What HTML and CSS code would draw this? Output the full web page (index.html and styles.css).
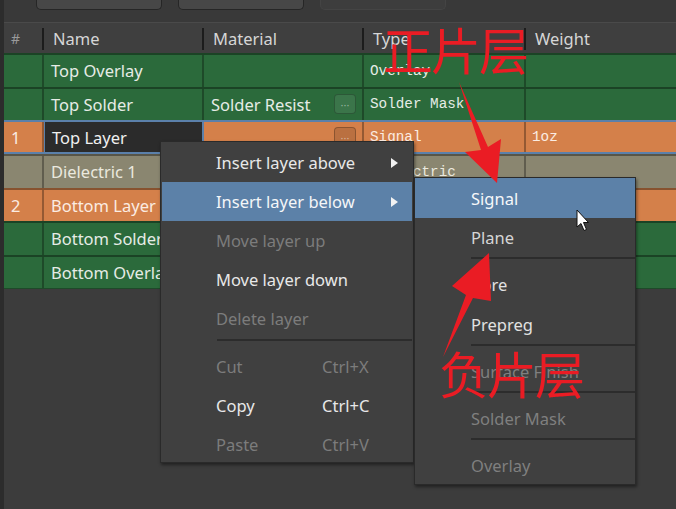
FILE: index.html
```html
<!DOCTYPE html>
<html>
<head>
<meta charset="utf-8">
<link rel="stylesheet" href="styles.css">
</head>
<body>
<div class="app">
  <div class="toolbar">
    <div class="tbtn"></div>
    <div class="tbtn"></div>
    <div class="tbtn flat"></div>
  </div>
  <div class="table">
    <div class="hdr">
      <div class="hc">#</div>
      <div class="hc">Name</div>
      <div class="hc">Material</div>
      <div class="hc">Type</div>
      <div class="hc last">Weight</div>
    </div>
    <div class="row green">
      <div class="c num"></div>
      <div class="c">Top Overlay</div>
      <div class="c"></div>
      <div class="c mono">Overlay</div>
      <div class="c mono"></div>
    </div>
    <div class="row green">
      <div class="c num"></div>
      <div class="c">Top Solder</div>
      <div class="c mat">Solder Resist<span class="dots">···</span></div>
      <div class="c mono">Solder Mask</div>
      <div class="c mono"></div>
    </div>
    <div class="row orange sel">
      <div class="c num">1</div>
      <div class="c edit">Top Layer</div>
      <div class="c mat"><span class="dots">···</span></div>
      <div class="c mono">Signal</div>
      <div class="c mono">1oz</div>
    </div>
    <div class="row khaki">
      <div class="c num"></div>
      <div class="c">Dielectric 1</div>
      <div class="c"></div>
      <div class="c mono">Dielectric</div>
      <div class="c mono"></div>
    </div>
    <div class="row orange">
      <div class="c num">2</div>
      <div class="c">Bottom Layer</div>
      <div class="c"></div>
      <div class="c mono">Signal</div>
      <div class="c mono">1oz</div>
    </div>
    <div class="row green">
      <div class="c num"></div>
      <div class="c">Bottom Solder</div>
      <div class="c"></div>
      <div class="c mono">Solder Mask</div>
      <div class="c mono"></div>
    </div>
    <div class="row green lastrow">
      <div class="c num"></div>
      <div class="c">Bottom Overlay</div>
      <div class="c"></div>
      <div class="c mono">Overlay</div>
      <div class="c mono"></div>
    </div>
  </div>

  <div class="menu main">
    <div class="mi"><span class="lbl">Insert layer above</span><span class="arr"></span></div>
    <div class="mi hi"><span class="lbl">Insert layer below</span><span class="arr"></span></div>
    <div class="mi dis"><span class="lbl">Move layer up</span></div>
    <div class="mi"><span class="lbl">Move layer down</span></div>
    <div class="mi dis"><span class="lbl">Delete layer</span></div>
    <div class="sep"></div>
    <div class="mi dis"><span class="lbl">Cut</span><span class="sc">Ctrl+X</span></div>
    <div class="mi"><span class="lbl">Copy</span><span class="sc">Ctrl+C</span></div>
    <div class="mi dis"><span class="lbl">Paste</span><span class="sc">Ctrl+V</span></div>
  </div>

  <div class="menu sub">
    <div class="si hi">Signal</div>
    <div class="si plane">Plane</div>
    <div class="ssep"></div>
    <div class="si">Core</div>
    <div class="si">Prepreg</div>
    <div class="ssep"></div>
    <div class="si dis">Surface Finish</div>
    <div class="ssep"></div>
    <div class="si dis">Solder Mask</div>
    <div class="ssep"></div>
    <div class="si dis">Overlay</div>
  </div>

  <svg class="overlay" width="676" height="509" viewBox="0 0 676 509">
    <polygon fill="#ea1c24" points="459,82 488,147 501,139 497,183 465,152 481,150"/>
    <polygon fill="#ea1c24" points="443,357 466,295 452,286 489,253 491,301 473,298"/>
    <path d="M577 210 L577 227 L581 223.5 L584 230.5 L586.5 229.5 L583.5 222.5 L588.5 222.5 Z" fill="#ffffff" stroke="#111" stroke-width="1"/>
  </svg>
  <div class="note n1">正片层</div>
  <div class="note n2">负片层</div>
</div>
</body>
</html>
```
FILE: styles.css
```css
* { box-sizing: border-box; }
html, body { margin: 0; padding: 0; }
body {
  width: 676px;
  height: 509px;
  overflow: hidden;
  background: #3b3b3b;
  font-family: "Noto Sans", "Open Sans", sans-serif;
  color: #e4e4e4;
}
.app {
  position: relative;
  width: 676px;
  height: 509px;
  border-left: 4px solid #2c2c2c;
  background: #3c3c3c;
}
.toolbar {
  height: 22px;
  display: flex;
  gap: 16px;
  padding-left: 32px;
  background: #393939;
}
.tbtn {
  width: 126px;
  height: 10px;
  background: #474747;
  border: 1px solid #262626;
  border-top: none;
  border-radius: 0 0 5px 5px;
}
.tbtn.flat {
  background: #3d3d3d;
  border-color: #444;
  width: 126px;
}
.table { display: flex; flex-direction: column; }
.hdr, .row {
  display: grid;
  grid-template-columns: 40px 160px 160px 162px 1fr;
}
.hdr {
  height: 31px;
  background: #3f3f3f;
  border-top: 1px solid #4a4a4a;
  color: #d6d6d6;
  font-size: 16.5px;
}
.hc {
  position: relative;
  padding-left: 9px;
  display: flex;
  align-items: center;
}
.hc:first-child { padding-left: 7px; color: #9a9a9a; font-size: 14px; }
.hc::after {
  content: "";
  position: absolute;
  right: 0;
  top: 5px;
  bottom: 3px;
  width: 2px;
  background: #1c1c1c;
}
.hc.last::after { display: none; }
.row {
  height: 33.5px;
  border-top: 2px solid rgba(0,0,0,0.36);
  font-size: 16.5px;
  color: #e6ece6;
}
.row.lastrow { height: 34px; border-bottom: 1.5px solid rgba(0,0,0,0.3); }
.green { background: #2b6a3b; }
.orange { background: #d4804a; color: #fbece2; }
.khaki { background: #8a8670; color: #ebe9df; }
.row.sel {
  border-top: 2px solid #5b80aa;
  border-bottom: 2px solid #5b80aa;
  height: 34px;
}
.c {
  display: flex;
  align-items: center;
  padding-left: 7px;
  border-right: 2px solid rgba(0,0,0,0.3);
  white-space: nowrap;
  overflow: hidden;
}
.c:last-child { border-right: none; }
.num { padding-left: 7px; }
.mat { justify-content: space-between; padding-right: 6px; }
.mono {
  font-family: "Liberation Mono", "DejaVu Sans Mono", monospace;
  font-size: 14.3px;
  padding-left: 6px;
}
.edit {
  background: #2b2b2b;
  color: #f0f0f0;
  border-left: 1px solid #5b80aa;
  border-right: 2px solid #5b80aa;
}
.dots {
  width: 22px;
  height: 20px;
  border-radius: 4px;
  background: rgba(255,255,255,0.08);
  border: 1px solid rgba(0,0,0,0.25);
  color: rgba(255,255,255,0.45);
  font-size: 11px;
  display: flex;
  align-items: center;
  justify-content: center;
  margin-left: auto;
}
.orange .dots { background: rgba(0,0,0,0.12); }

.menu {
  position: absolute;
  background: #404040;
  border: 1px solid #2a2a2a;
  box-shadow: 1px 2px 3px rgba(0,0,0,0.45);
  font-size: 16.5px;
}
.main {
  left: 156px;
  top: 141px;
  width: 254px;
  height: 322px;
  padding: 1px;
}
.mi {
  height: 39px;
  display: flex;
  align-items: center;
  padding-left: 54px;
  color: #e8e8e8;
}
.mi .lbl { width: 106px; white-space: nowrap; }
.mi .sc { color: inherit; }
.mi.dis { color: #7c7c7c; }
.mi.hi { background: #5c81a8; color: #f4f6f8; }
.arr {
  margin-left: auto;
  margin-right: 14px;
  width: 0;
  height: 0;
  border-top: 5px solid transparent;
  border-bottom: 5px solid transparent;
  border-left: 7px solid #f2f2f2;
}
.sep {
  height: 8px;
  margin-left: 55px;
  border-top: 2px solid #2c2c2c;
  margin-top: 1px;
}
.sub {
  left: 410px;
  top: 177px;
  width: 222px;
  height: 308px;
}
.si {
  height: 40px;
  display: flex;
  align-items: center;
  padding-left: 56px;
  color: #e2e2e2;
}
.si.hi { background: #5c81a8; color: #f6f8fa; }
.si.plane { color: #d6d6d6; height: 39px; }
.si.dis { color: #7f7f7f; }
.ssep {
  height: 7px;
  margin-left: 56px;
  border-top: 2px solid #2c2c2c;
}
.overlay {
  position: absolute;
  left: -4px;
  top: 0;
}
.note {
  position: absolute;
  font-family: "Noto Sans CJK SC", sans-serif;
  font-size: 50px;
  line-height: 1;
  color: #ea1c24;
  font-weight: 400;
  letter-spacing: -2px;
}
.n1 { left: 379px; top: 23px; }
.n2 { left: 435px; top: 347px; }
```
